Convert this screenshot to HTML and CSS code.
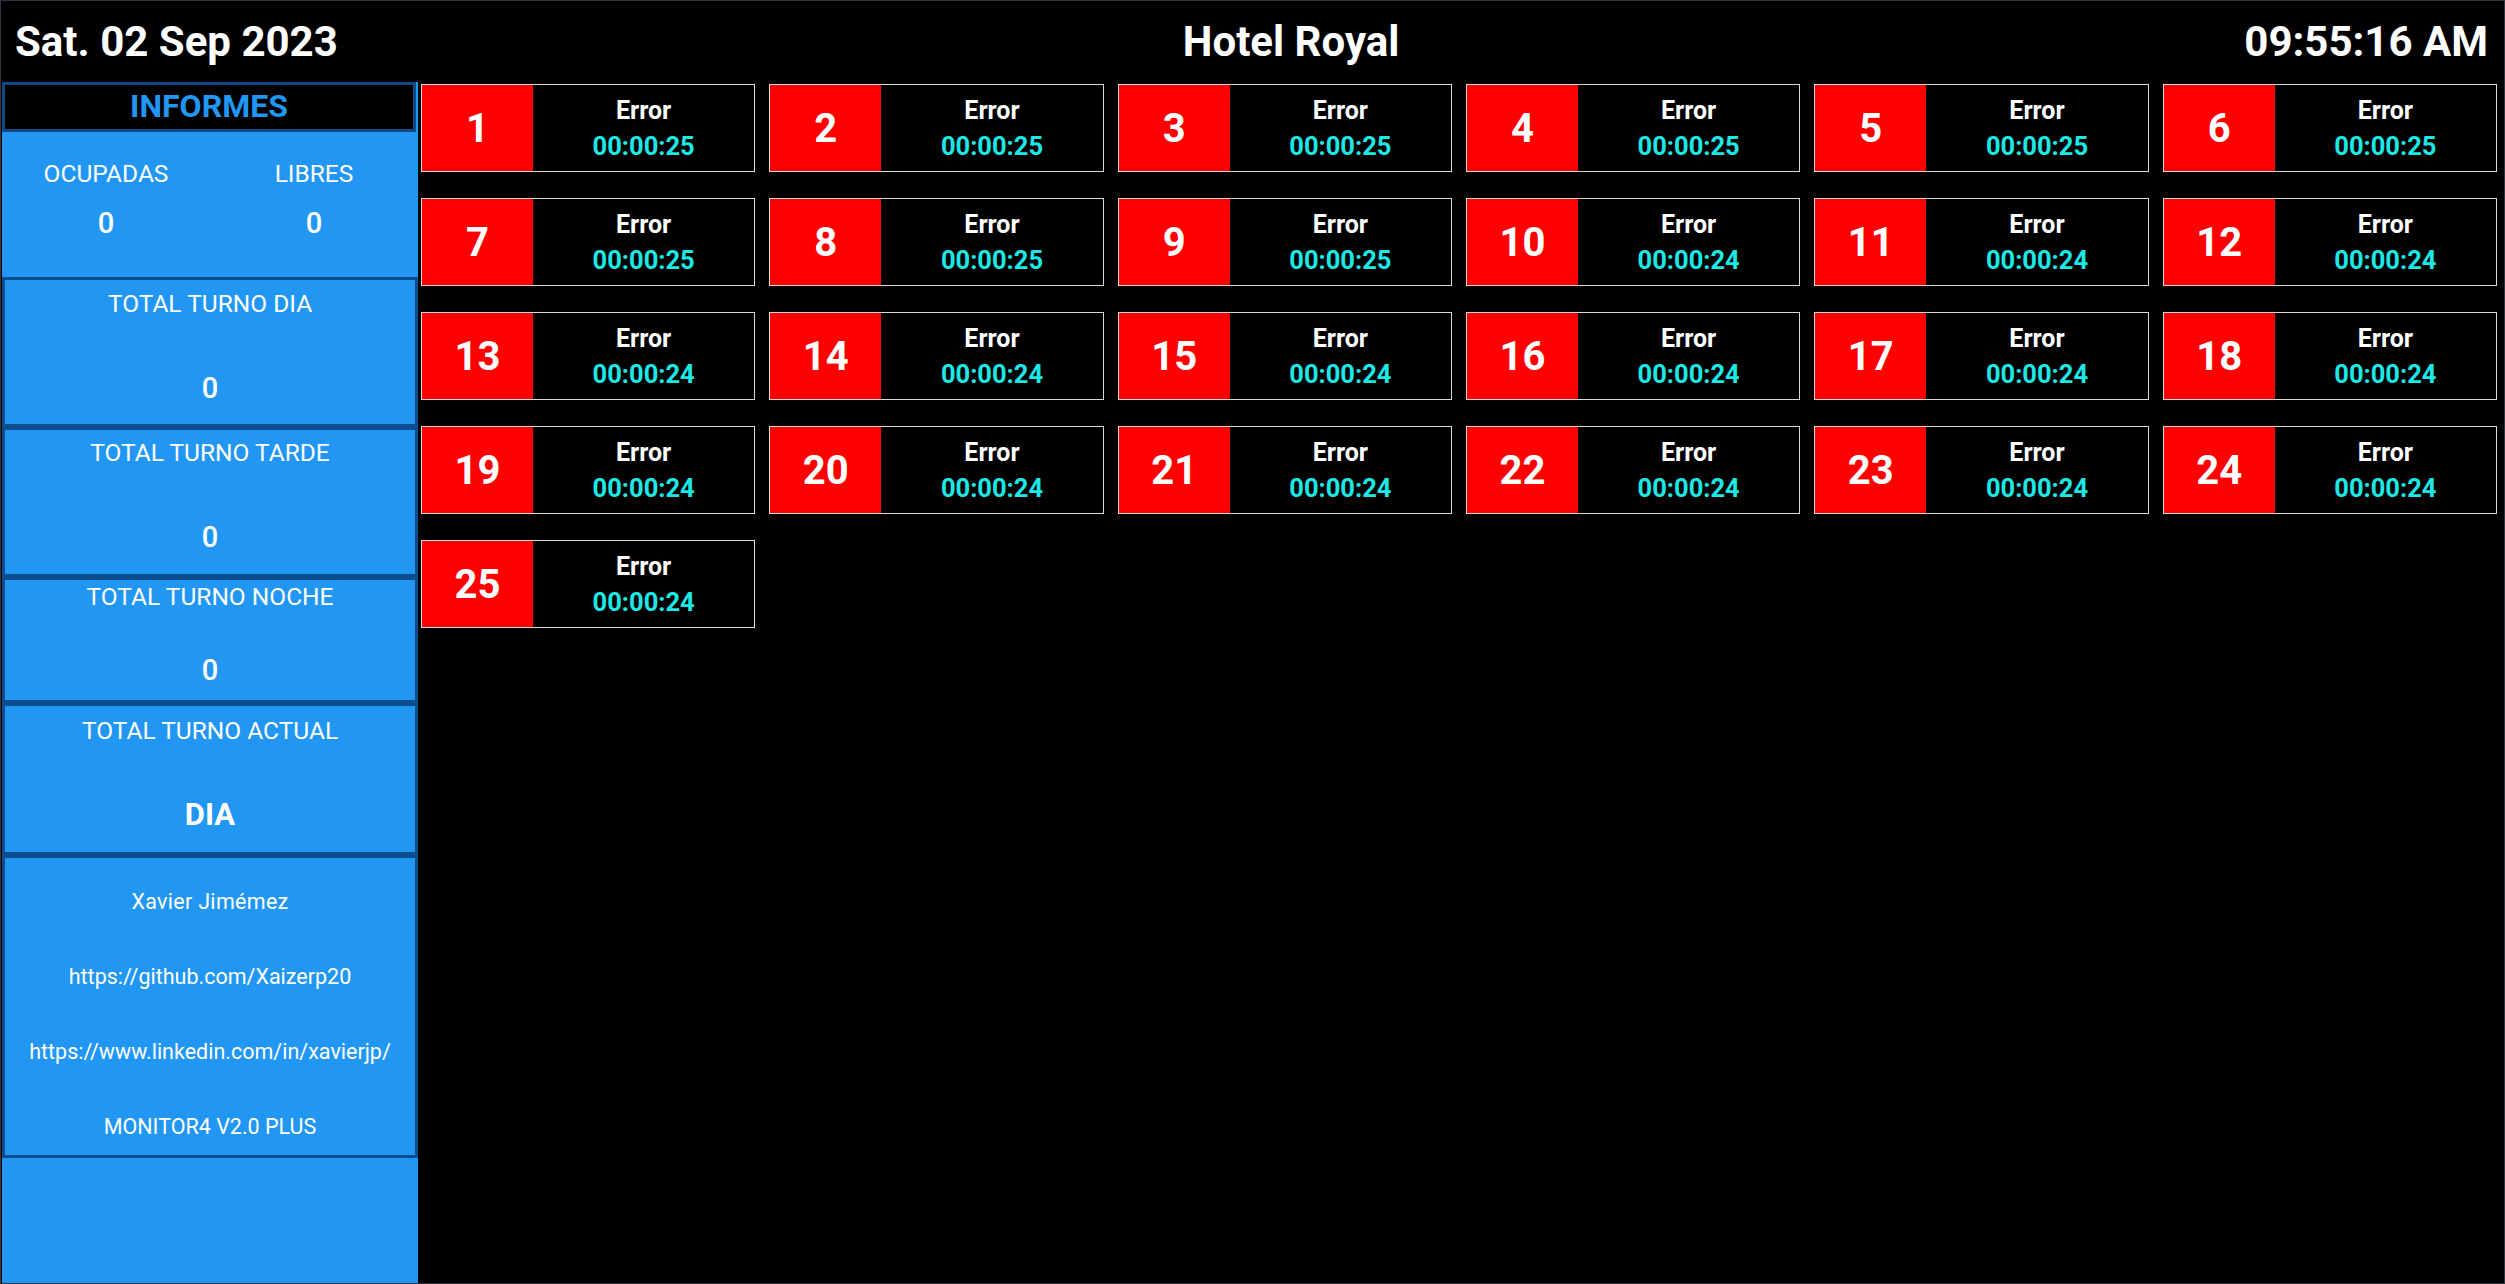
FILE: index.html
```html
<!DOCTYPE html>
<html lang="es">
<head>
<meta charset="utf-8">
<title>Hotel Royal - Monitor</title>
<link rel="stylesheet" href="styles.css">
</head>
<body>
<div class="screen">
  <header class="topbar">
    <div class="topbar-item">Sat. 02 Sep 2023</div>
    <div class="topbar-item">Hotel Royal</div>
    <div class="topbar-item">09:55:16 AM</div>
  </header>
  <div class="layout">
    <aside class="sidebar">
      <div class="informes">INFORMES</div>
      <div class="stats">
        <div class="stat">
          <div class="stat-label">OCUPADAS</div>
          <div class="stat-value">0</div>
        </div>
        <div class="stat">
          <div class="stat-label">LIBRES</div>
          <div class="stat-value">0</div>
        </div>
      </div>
      <div class="box box-dia">
        <div class="box-label">TOTAL TURNO DIA</div>
        <div class="box-value">0</div>
      </div>
      <div class="box box-tarde">
        <div class="box-label">TOTAL TURNO TARDE</div>
        <div class="box-value">0</div>
      </div>
      <div class="box box-noche">
        <div class="box-label">TOTAL TURNO NOCHE</div>
        <div class="box-value">0</div>
      </div>
      <div class="box box-actual">
        <div class="box-label">TOTAL TURNO ACTUAL</div>
        <div class="box-value box-value-text">DIA</div>
      </div>
      <div class="box credits">
        <div class="credit-line credit-name">Xavier Jimémez</div>
        <div class="credit-line">https://github.com/Xaizerp20</div>
        <div class="credit-line">https://www.linkedin.com/in/xavierjp/</div>
        <div class="credit-line">MONITOR4 V2.0 PLUS</div>
      </div>
      <div class="sidebar-fill"></div>
    </aside>
    <main class="rooms">
      <div class="room"><div class="room-num">1</div><div class="room-info"><div class="room-status">Error</div><div class="room-time">00:00:25</div></div></div>
      <div class="room"><div class="room-num">2</div><div class="room-info"><div class="room-status">Error</div><div class="room-time">00:00:25</div></div></div>
      <div class="room"><div class="room-num">3</div><div class="room-info"><div class="room-status">Error</div><div class="room-time">00:00:25</div></div></div>
      <div class="room"><div class="room-num">4</div><div class="room-info"><div class="room-status">Error</div><div class="room-time">00:00:25</div></div></div>
      <div class="room"><div class="room-num">5</div><div class="room-info"><div class="room-status">Error</div><div class="room-time">00:00:25</div></div></div>
      <div class="room"><div class="room-num">6</div><div class="room-info"><div class="room-status">Error</div><div class="room-time">00:00:25</div></div></div>
      <div class="room"><div class="room-num">7</div><div class="room-info"><div class="room-status">Error</div><div class="room-time">00:00:25</div></div></div>
      <div class="room"><div class="room-num">8</div><div class="room-info"><div class="room-status">Error</div><div class="room-time">00:00:25</div></div></div>
      <div class="room"><div class="room-num">9</div><div class="room-info"><div class="room-status">Error</div><div class="room-time">00:00:25</div></div></div>
      <div class="room"><div class="room-num">10</div><div class="room-info"><div class="room-status">Error</div><div class="room-time">00:00:24</div></div></div>
      <div class="room"><div class="room-num">11</div><div class="room-info"><div class="room-status">Error</div><div class="room-time">00:00:24</div></div></div>
      <div class="room"><div class="room-num">12</div><div class="room-info"><div class="room-status">Error</div><div class="room-time">00:00:24</div></div></div>
      <div class="room"><div class="room-num">13</div><div class="room-info"><div class="room-status">Error</div><div class="room-time">00:00:24</div></div></div>
      <div class="room"><div class="room-num">14</div><div class="room-info"><div class="room-status">Error</div><div class="room-time">00:00:24</div></div></div>
      <div class="room"><div class="room-num">15</div><div class="room-info"><div class="room-status">Error</div><div class="room-time">00:00:24</div></div></div>
      <div class="room"><div class="room-num">16</div><div class="room-info"><div class="room-status">Error</div><div class="room-time">00:00:24</div></div></div>
      <div class="room"><div class="room-num">17</div><div class="room-info"><div class="room-status">Error</div><div class="room-time">00:00:24</div></div></div>
      <div class="room"><div class="room-num">18</div><div class="room-info"><div class="room-status">Error</div><div class="room-time">00:00:24</div></div></div>
      <div class="room"><div class="room-num">19</div><div class="room-info"><div class="room-status">Error</div><div class="room-time">00:00:24</div></div></div>
      <div class="room"><div class="room-num">20</div><div class="room-info"><div class="room-status">Error</div><div class="room-time">00:00:24</div></div></div>
      <div class="room"><div class="room-num">21</div><div class="room-info"><div class="room-status">Error</div><div class="room-time">00:00:24</div></div></div>
      <div class="room"><div class="room-num">22</div><div class="room-info"><div class="room-status">Error</div><div class="room-time">00:00:24</div></div></div>
      <div class="room"><div class="room-num">23</div><div class="room-info"><div class="room-status">Error</div><div class="room-time">00:00:24</div></div></div>
      <div class="room"><div class="room-num">24</div><div class="room-info"><div class="room-status">Error</div><div class="room-time">00:00:24</div></div></div>
      <div class="room"><div class="room-num">25</div><div class="room-info"><div class="room-status">Error</div><div class="room-time">00:00:24</div></div></div>
    </main>
  </div>
</div>
</body>
</html>
```
FILE: styles.css
```css
* {
  box-sizing: border-box;
}

html, body {
  margin: 0;
  padding: 0;
  background: #000;
}

body {
  font-family: Roboto, "Liberation Sans", sans-serif;
  color: #fff;
}

.screen {
  width: 2505px;
  height: 1284px;
  border: 1px solid #30363f;
  display: flex;
  flex-direction: column;
  background: #000;
  overflow: hidden;
}

/* Header */
.topbar {
  height: 81px;
  flex: none;
  display: flex;
  justify-content: space-between;
  align-items: center;
  padding: 0 16px 0 14px;
}

.topbar-item {
  font-size: 42px;
  font-weight: 700;
  line-height: 1;
  color: #fff;
}

/* Layout */
.layout {
  flex: 1;
  display: flex;
  min-height: 0;
}

/* Sidebar */
.sidebar {
  width: 416px;
  margin-left: 1px;
  flex: none;
  background: #2196f3;
  display: flex;
  flex-direction: column;
}

.informes {
  height: 50px;
  flex: none;
  background: #000;
  border: 3px solid #0e4a88;
  margin-right: 2px;
  display: flex;
  align-items: center;
  justify-content: center;
  color: #2196f3;
  font-size: 32px;
  font-weight: 700;
  padding-bottom: 2px;
}

.stats {
  height: 145px;
  flex: none;
  display: grid;
  grid-template-columns: 1fr 1fr;
  padding-top: 27px;
}

.stat {
  display: flex;
  flex-direction: column;
  align-items: center;
  gap: 18px;
}

.stat-label {
  font-size: 24.5px;
  line-height: 29px;
  font-weight: 400;
}

.stat-value {
  font-size: 29px;
  line-height: 34px;
  font-weight: 500;
}

.box {
  flex: none;
  border: 3px solid #0c4d8f;
  display: flex;
  flex-direction: column;
  align-items: center;
}

.box-label {
  font-size: 24.5px;
  line-height: 29px;
  font-weight: 400;
}

.box-value {
  font-size: 29px;
  line-height: 34px;
  font-weight: 500;
}

.box-value-text {
  font-size: 31px;
  line-height: 36px;
  font-weight: 700;
}

.box-dia {
  height: 150px;
  padding-top: 9px;
  gap: 53px;
}

.box-tarde {
  height: 150px;
  padding-top: 8px;
  gap: 53px;
}

.box-noche {
  height: 126px;
  padding-top: 2px;
  gap: 42px;
}

.box-actual {
  height: 152px;
  padding-top: 10px;
  gap: 52px;
}

.credits {
  height: 303px;
  padding-top: 31px;
  gap: 50px;
}

.credit-line {
  font-size: 21.5px;
  line-height: 25px;
}

.credit-name {
  letter-spacing: 0.3px;
}

.sidebar-fill {
  flex: 1;
}

/* Rooms grid */
.rooms {
  width: 2079px;
  flex: none;
  padding: 2px 0 0 3px;
  display: grid;
  grid-template-columns: repeat(6, 1fr);
  grid-auto-rows: 88px;
  column-gap: 14px;
  row-gap: 26px;
  align-content: start;
}

.room {
  display: flex;
  border: 1px solid #d9d9d9;
  background: #000;
}

.room-num {
  width: 33.4%;
  flex: none;
  background: #ff0000;
  display: flex;
  align-items: center;
  justify-content: center;
  font-size: 40px;
  font-weight: 700;
  color: #fff;
}

.room-info {
  flex: 1;
  display: flex;
  flex-direction: column;
  align-items: center;
  justify-content: center;
  padding-top: 1px;
}

.room-status {
  font-size: 25px;
  line-height: 36px;
  font-weight: 700;
  color: #fff;
}

.room-time {
  font-size: 25.5px;
  line-height: 35px;
  font-weight: 700;
  color: #1ce8e6;
}
```
